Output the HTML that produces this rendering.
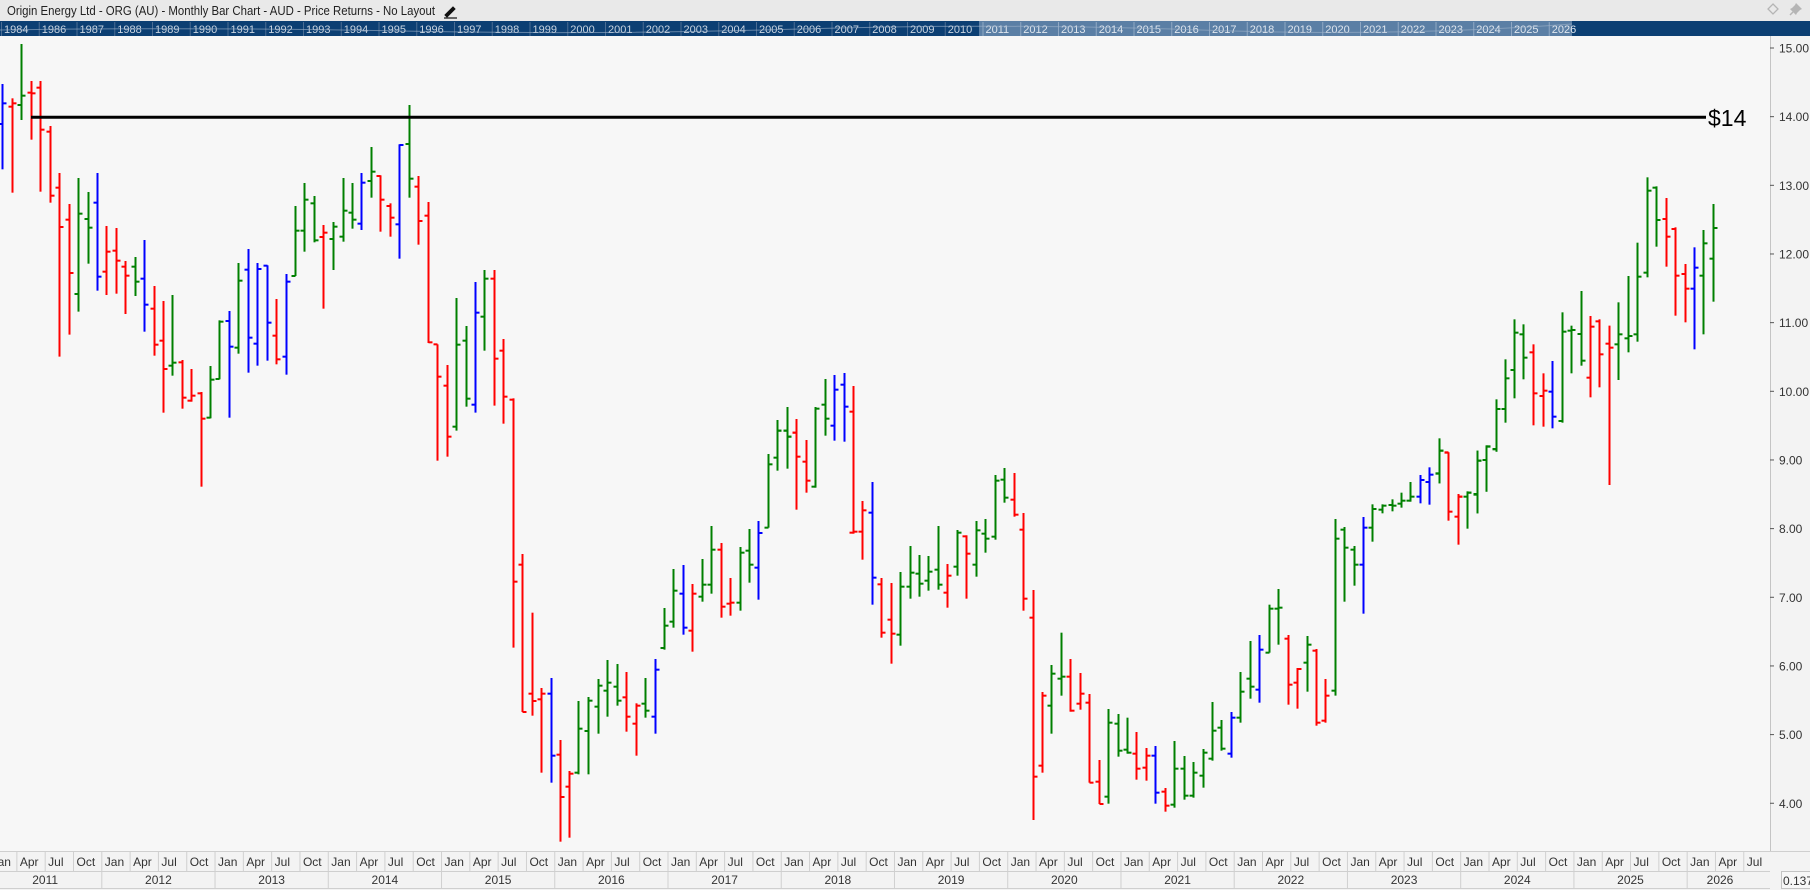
<!DOCTYPE html>
<html><head><meta charset="utf-8">
<style>
html,body{margin:0;padding:0;width:1810px;height:890px;overflow:hidden;background:#f7f7f7;font-family:"Liberation Sans",sans-serif;}
svg{display:block}
</style></head>
<body>
<svg id="s" width="1810" height="890" xmlns="http://www.w3.org/2000/svg" font-family="Liberation Sans, sans-serif">
<rect x="0" y="0" width="1810" height="890" fill="#f7f7f7"/>
<rect x="0" y="0" width="1810" height="21" fill="#e9e9e9"/>
<text x="7" y="15" font-size="12.5" fill="#222" textLength="428" lengthAdjust="spacingAndGlyphs">Origin Energy Ltd - ORG (AU) - Monthly Bar Chart - AUD - Price Returns - No Layout</text>
<g transform="translate(443,4)" stroke="#111" fill="none">
<path d="M2 11 L10 3 L12 5 L4 13 Z" fill="#111" stroke-width="1"/>
<path d="M1 14 L14 14" stroke-width="1.2"/>
</g>
<g transform="translate(1767,3)" fill="none" stroke="#b5b5b5" stroke-width="1.3">
<path d="M6 1 L11 6 L6 11 L1 6 Z"/>
</g>
<g transform="translate(1790,3)" fill="#b5b5b5" stroke="#b5b5b5">
<path d="M6 0 L12 6 L10 7 L7 10 L6 12 L0 6 L2 5 L5 2 Z" stroke="none"/>
<path d="M3 9 L0 12" stroke-width="1.5"/>
</g>
<rect x="0" y="21" width="1810" height="15" fill="#0c3f73"/>
<rect x="979" y="21" width="593" height="15" fill="#5b7fa5"/>
<g id="yrs"></g>
<rect x="1770" y="36" width="40" height="815" fill="#f3f3f3"/>
<line x1="1770.5" y1="36" x2="1770.5" y2="851" stroke="#c4c4c4"/>
<rect x="0" y="851" width="1810" height="39" fill="#f3f3f3"/>
<line x1="0" y1="851.5" x2="1810" y2="851.5" stroke="#cfcfcf"/>
<line x1="0" y1="871.5" x2="1770" y2="871.5" stroke="#cfcfcf"/>
<line x1="0" y1="888.5" x2="1770" y2="888.5" stroke="#cfcfcf"/>
<rect x="1781.5" y="871.5" width="30" height="17" fill="#f7f7f7" stroke="#c4c4c4"/>
<text x="1783" y="885" font-size="12" fill="#333">0.137</text>
<g id="axis"></g>
<g id="bars"></g>
<line x1="31" y1="117.3" x2="1706" y2="117.3" stroke="#000" stroke-width="3"/>
<text x="1708" y="126" font-size="23" fill="#000">$14</text>
</svg>
<script>
var NS="http://www.w3.org/2000/svg";
function el(p,t,a,txt){var e=document.createElementNS(NS,t);for(var k in a)e.setAttribute(k,a[k]);if(txt!=null)e.textContent=txt;p.appendChild(e);return e;}
var yrs=document.getElementById('yrs');
var ylist=[1984];for(var y=1986;y<=2026;y++)ylist.push(y);
for(var i=0;i<ylist.length;i++){var x=3+37.75*i;var light=(x>975&&x<1572);
el(yrs,'text',{x:x+1,y:33,'font-size':11,fill:light?'#dfe6ee':'#c9d4e0'},ylist[i]);
el(yrs,'line',{x1:x-1.5,y1:22,x2:x-1.5,y2:36,stroke:light?'#8fa8c4':'#4a6c93','stroke-width':1});}
el(yrs,'path',{d:'M0 30 Q200 27 400 31 T800 29 T1200 30 T1572 24',stroke:'#9fb3c9',fill:'none','stroke-width':1,opacity:0.6});
var ax=document.getElementById('axis');
for(var p=4;p<=15;p++){var yy=48+(15-p)*68.66;
el(ax,'line',{x1:1770,y1:yy,x2:1774,y2:yy,stroke:'#555'});
el(ax,'text',{x:1779,y:yy+4.5,'font-size':12,fill:'#333'},p.toFixed(2));}
var mn=['Jan','Apr','Jul','Oct'];
for(var yr=2011;yr<=2026;yr++){var jx=101.8+113.24*(yr-2012);
for(var q=0;q<4;q++){var mx=jx+28.31*q;if(mx>1760)break;
el(ax,'line',{x1:mx,y1:852,x2:mx,y2:871,stroke:'#d0d0d0'});
el(ax,'text',{x:mx+3,y:866,'font-size':12,fill:'#333'},mn[q]);}
el(ax,'line',{x1:jx,y1:872,x2:jx,y2:888,stroke:'#d0d0d0'});
var cx=jx+56.6; if(yr==2026)cx=1720;
el(ax,'text',{x:cx,y:884,'font-size':12,fill:'#333','text-anchor':'middle'},yr);}
var Z={a:[0,40],b:[455,200],c:[455,420],d:[910,300],e:[1365,40],f:[1365,440]};
var C={g:'#008000',r:'#ff0000',b:'#0000ff'};
var D={
a:[[5,'b',132,388,252,190],[36,'r',175,458,200,190],[63,'g',12,240,195,167],[93,'r',123,299,158,160],[120,'r',123,455,143,269],[150,'r',258,488,275,467],[177,'r',399,950,443,561],[206,'r',492,884,539,699],[234,'g',414,815,762,521],[263,'g',456,671,537,563],[291,'b',399,752,488,710],[318,'r',558,765,695,635],[347,'r',564,761,632,662],[375,'r',663,822,680,707],[404,'g',651,768,680,725],[432,'b',600,875,716,794],[461,'r',738,947,806,914],[489,'r',783,1118,902,987],[517,'g',765,1007,977,968],[545,'r',960,1106,967,1073],[572,'r',987,1085,1082,1067],[602,'r',1056,1340,1060,1136],[629,'g',978,1135,1133,1019],[658,'g',841,1018,1017,845],[686,'b',813,1133,843,920],[715,'g',669,941,923,722],[743,'b',627,998,689,893],[772,'b',669,977,911,687],[800,'b',676,962,677,848],[829,'r',777,973,887,958],[857,'b',702,1004,950,725],[884,'g',498,708,708,572],[913,'g',429,635,572,479],[941,'g',468,607,490,601],[970,'r',555,806,591,578],[998,'g',546,690,597,560],[1028,'g',414,605,590,512],[1055,'g',429,566,518,539],[1084,'b',399,570,551,428],[1112,'g',321,473,423,395],[1140,'r',406,575,408,479],[1169,'r',490,590,498,533],[1197,'b',313,656,553,315],[1226,'g',195,473,312,416],[1254,'r',408,614,440,543],[1283,'r',486,909,527,907],[1311,'r',913,1262,913,1010],[1340,'r',975,1250,1037,1190],[1368,'g',774,1172,1160,914]],
b:[[33,'g',378,620,422,596],[60,'b',246,638,614,338],[87,'g',210,452,350,236],[117,'r',210,617,236,476],[144,'r',417,671,452,590],[174,'r',595,720,599,null],[966,'g',669,720,null,692],[995,'g',621,720,692,710],[1022,'r',657,720,698,null],[1080,'g',621,720,null,626],[1109,'g',537,707,614,656],[1137,'b',525,720,677,569],[1166,'b',519,720,554,620],[1193,'r',558,720,635,null]],
c:[[174,'r',0,683,null,485],[201,'r',402,876,434,876],[231,'r',578,887,821,843],[258,'r',804,1058,838,821],[288,'b',774,1088,821,1007],[315,'r',960,1265,1004,1131],[342,'r',1053,1253,1100,1061],[370,'g',843,1063,1058,926],[399,'g',831,1063,933,842],[429,'g',777,941,860,797],[456,'g',720,890,812,788],[486,'g',732,857,800,842],[513,'r',756,935,832,890],[542,'r',850,1007,911,857],[570,'g',774,893,851,872],[600,'b',717,941,890,749],[627,'g',564,689,684,617],[654,'g',447,623,605,512],[684,'b',435,644,521,623],[711,'r',492,695,632,521],[740,'g',417,545,530,494],[768,'g',318,521,494,389],[797,'r',369,593,389,560],[825,'r',474,587,551,548],[854,'g',381,572,548,398],[882,'g',327,488,392,434],[909,'b',303,539,443,339],[939,'g',102,323,323,133],[966,'g',0,152,113,32],[995,'g',0,146,32,50],[1022,'r',0,269,38,110],[1052,'r',60,218,125,182],[1080,'g',0,203,200,null],[1109,'g',0,46,null,null],[1137,'b',0,62,null,null],[1166,'b',0,65,null,null],[1193,'r',0,341,338,335],[1221,'r',243,419,335,271],[1250,'b',186,554,278,473],[1277,'r',474,653,493,638],[1307,'r',489,731,599,641],[1334,'g',456,677,644,500],[1364,'g',378,536,500,458]],
d:[[27,'g',765,890,821,851],[55,'g',768,872,842,815],[83,'g',678,869,809,854],[110,'r',792,923,878,827],[140,'g',690,827,800,698],[167,'r',706,896,709,761],[197,'g',663,830,794,691],[224,'g',657,758,701,716],[254,'g',525,719,710,542],[282,'g',504,608,539,593],[311,'r',519,650,599,644],[339,'r',639,932,689,896],[369,'r',870,1560,953,1430],[396,'r',1176,1418,1397,1187],[423,'g',1095,1301,1217,1121],[453,'g',998,1187,1136,1130],[480,'r',1077,1235,1130,1232],[510,'r',1119,1229,1211,1181],[538,'r',1182,1448,1208,1448],[567,'r',1380,1512,1445,1512],[594,'g',1227,1511,1490,1268],[624,'g',1242,1370,1271,1352],[651,'g',1253,1361,1349,1358],[678,'r',1296,1439,1361,1406],[708,'r',1344,1442,1403,1367],[735,'b',1338,1511,1367,1478],[764,'r',1464,1535,1475,1517],[792,'g',1323,1523,1514,1406],[822,'g',1368,1499,1406,1487],[849,'g',1386,1493,1487,1418],[879,'g',1347,1463,1427,1358],[906,'g',1206,1382,1376,1292],[933,'g',1260,1352,1283,1346],[963,'b',1236,1373,1361,1253],[990,'g',1116,1268,1253,1175],[1019,'g',1023,1196,1136,1160],[1047,'b',1005,1208,1169,1049],[1077,'g',914,1058,1058,926],[1104,'g',867,1034,926,923],[1133,'r',1005,1214,1016,1154],[1161,'r',1104,1226,1148,1107],[1190,'g',1008,1175,1088,1034],[1218,'r',1047,1277,1052,1268],[1245,'r',1137,1268,1262,1187],[1274,'g',657,1187,1172,716],[1301,'g',681,905,689,743],[1331,'g',738,857,749,794],[1358,'b',651,941,794,683]],
f:[[22,'g',193,305,263,207],[50,'g',193,220,209,197],[80,'g',178,214,195,197],[107,'g',158,203,191,182],[134,'g',126,185,182,170],[164,'b',105,190,170,120],[192,'b',82,194,126,104],[222,'g',0,130,101,32],[248,'r',37,242,38,215],[278,'r',162,314,230,170],[306,'g',154,266,170,158],[335,'g',32,220,164,62],[363,'g',16,155,60,19],[392,'g',0,35,27,null]],
e:[[222,'g',1195,1330,1300,1232],[248,'r',1237,1440,1237,null],[278,'r',1362,1440,null,1370],[306,'g',1355,1440,null,1358],[335,'g',1232,1420,1362,1262],[363,'g',1217,1355,1260,1220],[392,'g',1078,1235,1228,1107],[420,'g',958,1148,1107,1015],[447,'g',838,1075,990,878],[475,'g',853,1018,883,953],[503,'r',913,1156,937,1060],[533,'r',1000,1160,1068,1052],[561,'b',963,1165,1055,1130],[590,'g',817,1148,1143,875],[618,'g',857,1000,872,870],[647,'g',753,977,882,962],[675,'r',828,1072,1013,860],[702,'r',838,1042,844,943],[732,'r',857,1335,911,923],[760,'g',787,1020,913,883],[789,'g',708,937,895,888],[817,'g',608,905,883,710],[846,'g',412,712,698,452],[873,'g',439,620,443,540],[903,'r',474,680,537,590],[930,'r',562,827,567,707],[960,'r',672,847,702,746],[987,'b',622,928,746,683],[1015,'g',570,883,707,610],[1044,'g',492,785,656,564]]
};
var B=document.getElementById('bars');
for(var k in D){var o=Z[k];D[k].forEach(function(b){
var x=Math.round(o[0]+b[0]/3)+0.5, col=C[b[1]];
var t=o[1]+b[2]/3,bt=o[1]+b[3]/3;
el(B,'line',{x1:x,y1:t,x2:x,y2:bt,stroke:col,'stroke-width':2});
if(b[4]!=null){var y=o[1]+b[4]/3;el(B,'line',{x1:x-4,y1:y,x2:x,y2:y,stroke:col,'stroke-width':2});}
if(b[5]!=null){var y2=o[1]+b[5]/3;el(B,'line',{x1:x,y1:y2,x2:x+4,y2:y2,stroke:col,'stroke-width':2});}
});}
</script>
</body></html>
